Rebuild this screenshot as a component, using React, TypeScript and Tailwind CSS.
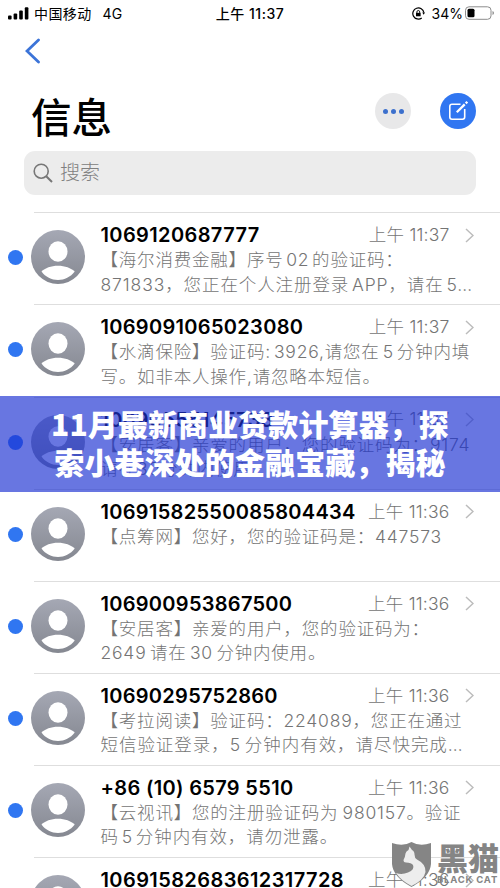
import React from 'react';

interface Message {
  sender: string;
  senderClass: string;
  time: string;
  lines: { text: string; className: string }[];
}

const messages: Message[] = [
  {
    sender: '1069120687777',
    senderClass: 'tracking-[0.38px]',
    time: '11:37',
    lines: [
      { text: '【海尔消费金融】序号 02 的验证码：', className: 'tracking-[0.8px] [word-spacing:-3px]' },
      { text: '871833，您正在个人注册登录 APP，请在 5…', className: 'tracking-[0.9px] [word-spacing:-3px]' },
    ],
  },
  {
    sender: '1069091065023080',
    senderClass: 'tracking-[0.31px]',
    time: '11:37',
    lines: [
      { text: '【水滴保险】验证码: 3926,请您在 5 分钟内填', className: 'tracking-[0.8px] [word-spacing:-2.7px]' },
      { text: '写。如非本人操作,请忽略本短信。', className: 'tracking-[0.8px]' },
    ],
  },
  {
    sender: '10690555145733',
    senderClass: 'tracking-[0.3px]',
    time: '11:37',
    lines: [
      { text: '【安居客】亲爱的用户，您的验证码为：9174', className: 'tracking-[0.8px]' },
      { text: '请在30分钟内使用。', className: 'tracking-[0.8px]' },
    ],
  },
  {
    sender: '10691582550085804434',
    senderClass: 'tracking-[0.3px]',
    time: '11:36',
    lines: [{ text: '【点筹网】您好，您的验证码是：447573', className: 'tracking-[0.8px]' }],
  },
  {
    sender: '106900953867500',
    senderClass: 'tracking-[0.28px]',
    time: '11:36',
    lines: [
      { text: '【安居客】亲爱的用户，您的验证码为：', className: 'tracking-[0.8px]' },
      { text: '2649 请在 30 分钟内使用。', className: 'tracking-[0.8px] [word-spacing:-2.3px]' },
    ],
  },
  {
    sender: '10690295752860',
    senderClass: 'tracking-[0.28px]',
    time: '11:36',
    lines: [
      { text: '【考拉阅读】验证码：224089，您正在通过', className: 'tracking-[0.8px]' },
      { text: '短信验证登录，5 分钟内有效，请尽快完成…', className: 'tracking-[0.95px] [word-spacing:-2px]' },
    ],
  },
  {
    sender: '+86 (10) 6579 5510',
    senderClass: 'tracking-[0.33px]',
    time: '11:36',
    lines: [
      { text: '【云视讯】您的注册验证码为 980157。验证', className: 'tracking-[0.8px] [word-spacing:-1.5px]' },
      { text: '码 5 分钟内有效，请勿泄露。', className: 'tracking-[0.9px] [word-spacing:-3px]' },
    ],
  },
  {
    sender: '10691582683612317728',
    senderClass: 'tracking-[0.4px]',
    time: '11:36',
    lines: [],
  },
];

const Avatar: React.FC = () => (
  <svg viewBox="0 0 54 54" className="mt-[18px] ml-[8px] h-[54px] w-[54px] shrink-0">
    <defs>
      <linearGradient id="avatar" x1="0" y1="0" x2="0" y2="1">
        <stop offset="0" stopColor="#a5a8b4" />
        <stop offset="1" stopColor="#858891" />
      </linearGradient>
    </defs>
    <circle cx="27" cy="27" r="27" fill="url(#avatar)" />
    <ellipse cx="27" cy="21.5" rx="9.5" ry="10.3" fill="#fff" />
    <path d="M10.5 41.5C14 38 20 35.7 27 35.7S40 38 43.7 41.5C39.5 47 33.5 50 27 50S14.5 47 10.5 41.5Z" fill="#fff" />
  </svg>
);

const StatusBar: React.FC = () => (
  <div className="grid h-[26px] shrink-0 grid-cols-3 items-center text-[14px] text-black">
    <div className="flex items-center pl-[8px]">
      <svg viewBox="0 0 21 13" className="h-[13px] w-[21px]">
        <rect x="0" y="8.5" width="3.6" height="4" rx="1" />
        <rect x="5.6" y="6.5" width="3.6" height="6" rx="1" />
        <rect x="11.2" y="3.5" width="3.6" height="9" rx="1" />
        <rect x="16.8" y="0.3" width="3.6" height="12.2" rx="1" />
      </svg>
      <span className="ml-[5px] tracking-[0.4px]">中国移动</span>
      <span className="ml-[11px]">4G</span>
    </div>
    <div className="text-center font-medium tracking-[0.5px]">上午 11:37</div>
    <div className="flex items-center justify-end pr-[6px]">
      <svg viewBox="0 0 14 14" className="h-[13px] w-[13px]" fill="none" stroke="#000" strokeWidth="1.3">
        <path d="M10.5 11.8A6 6 0 1 1 12.8 6" />
        <path d="M11 6H14L12.6 8.3Z" fill="#000" stroke="none" />
        <rect x="4.3" y="6.3" width="5" height="3.7" fill="#000" stroke="none" />
        <path d="M5.3 6.5V5.3a1.5 1.5 0 0 1 3 0V6.5" strokeWidth="1" />
      </svg>
      <span className="ml-[7px]">34%</span>
      <svg viewBox="0 0 30 14" className="ml-[2px] -mr-px h-[14px] w-[30px]">
        <rect x="0.5" y="0.8" width="25.5" height="12.5" rx="3.5" fill="none" stroke="#8c8c8c" />
        <rect x="2.5" y="2.8" width="7" height="8.5" rx="1.5" />
        <path d="M27.5 5v4q1.5-.5 1.5-2t-1.5-2" fill="#8c8c8c" />
      </svg>
    </div>
  </div>
);

const MessageRow: React.FC<{ message: Message }> = ({ message }) => (
  <div className="flex h-[92.1px] shrink-0">
    <div className="mt-[38px] ml-[8px] h-[15px] w-[15px] shrink-0 rounded-full bg-[#3076f1]" />
    <Avatar />
    <div className="ml-[15.5px] w-[399px] shrink-0 whitespace-nowrap">
      <div className="mt-[11px] flex h-[24px] items-center">
        <span className={`text-[20px] font-semibold text-black ${message.senderClass}`}>{message.sender}</span>
        <span className="ml-auto text-[17.5px] font-light tracking-[0.2px] text-[#747474]">上午 {message.time}</span>
        <svg viewBox="0 0 9 15" className="mr-[26px] ml-[15px] h-[15px] w-[9px]" fill="none" stroke="#bcbcbc" strokeWidth="1.5">
          <path d="M1 1L8 7.5L1 14" />
        </svg>
      </div>
      {message.lines.map((line) => (
        <div key={line.text} className={`h-[24.3px] text-[17.5px] leading-[25px] font-light text-[#747474] ${line.className}`}>
          {line.text}
        </div>
      ))}
    </div>
  </div>
);

const Watermark: React.FC = () => (
  <div className="absolute top-[841px] left-[391px] flex text-[#858585]">
    <svg viewBox="0 0 42 48" className="h-[48px] w-[42px]">
      <path d="M1 2Q12 6 20.5 1Q29 6 40 2V23Q39 36 20.5 46Q2 36 1 23Z" fill="#858585" />
      <path
        d="M18.5 5.5L21 9Q23.5 10 23.5 13.5Q23.5 17 26 18.5Q35 23 34.5 31Q33 39 20.5 45Q10 39.5 5 32Q11 34 17 31.5Q24 28.5 22 24Q20.5 21.500 15 21.5Q12.5 21.5 12.5 19Q14 17 14.5 12.5Q15 10 17.5 9Z"
        fill="#fff"
        fillOpacity="0.85"
      />
    </svg>
    <div className="ml-[4px]">
      <div className="h-[31px] text-[31px] leading-[36px] font-black">黑猫</div>
      <div className="text-[9.5px] leading-[15px] font-bold tracking-[0.8px]">BLACK CAT</div>
    </div>
  </div>
);

export default function App() {
  return (
    <div className="relative flex h-[888px] w-[500px] flex-col overflow-hidden bg-white font-[Inter,'Noto_Sans_CJK_SC',sans-serif]">
      <StatusBar />
      <svg viewBox="0 0 16 26" className="mt-[12px] ml-[25px] h-[26px] w-[16px] shrink-0" fill="none" stroke="#3c74d8" strokeWidth="2.8" strokeLinecap="round">
        <path d="M13.5 2L2 13L13.5 24" />
      </svg>
      <header className="mt-[22px] flex h-[60px] shrink-0 items-start pr-[24px] pl-[31px]">
        <h1 className="pt-[2px] text-[40.5px] leading-[61px] font-medium text-black">信息</h1>
        <div className="mt-[7px] ml-auto flex h-[36px] w-[36px] items-center justify-center gap-[3px] rounded-full bg-[#e8e8e9]">
          <i className="h-[5px] w-[5px] rounded-full bg-[#3c70cd]" />
          <i className="h-[5px] w-[5px] rounded-full bg-[#3c70cd]" />
          <i className="h-[5px] w-[5px] rounded-full bg-[#3c70cd]" />
        </div>
        <div className="mt-[7px] ml-[29px] flex h-[36px] w-[36px] items-center justify-center rounded-full bg-[#3076f1]">
          <svg viewBox="0 0 20 20" className="h-[20px] w-[20px]" fill="none" stroke="#fff" strokeWidth="1.6">
            <path d="M12.5 3.3H4Q1.8 3.3 1.8 5.5V16Q1.8 18.2 4 18.2H14.5Q16.7 18.2 16.7 16V8" />
            <path d="M8.8 11.3L16.7 3.4" strokeWidth="2.3" />
            <path d="M17.7 2.4L19.3 .8" strokeWidth="2.3" />
          </svg>
        </div>
      </header>
      <div className="mx-[24px] mt-[5px] flex h-[44px] shrink-0 items-center rounded-[11px] bg-[#ececec] pl-[9px] text-[#808080]">
        <svg viewBox="0 0 20 20" className="h-[20px] w-[20px]" fill="none" stroke="#777" strokeWidth="1.6">
          <circle cx="8.2" cy="8.2" r="7" />
          <path d="M13.2 13.2L19 19" strokeWidth="2" />
        </svg>
        <span className="ml-[7px] text-[20px] font-light">搜索</span>
      </div>
      <main className="mt-[17.4px] flex flex-col">
        {messages.map((message) => (
          <React.Fragment key={message.sender}>
            <div className="-mb-px ml-[34px] h-px shrink-0 bg-[#dedede]" />
            <MessageRow message={message} />
          </React.Fragment>
        ))}
      </main>
      <div className="absolute top-[396px] left-0 h-[96px] w-full bg-[rgba(30,51,210,0.67)] pt-[8px] text-center text-[30px] leading-[38px] font-black tracking-[0.1px] whitespace-nowrap text-white font-['Noto_Sans_CJK_SC',sans-serif]">
        <div>11月最新商业贷款计算器，探</div>
        <div>索小巷深处的金融宝藏，揭秘</div>
      </div>
      <Watermark />
    </div>
  );
}
